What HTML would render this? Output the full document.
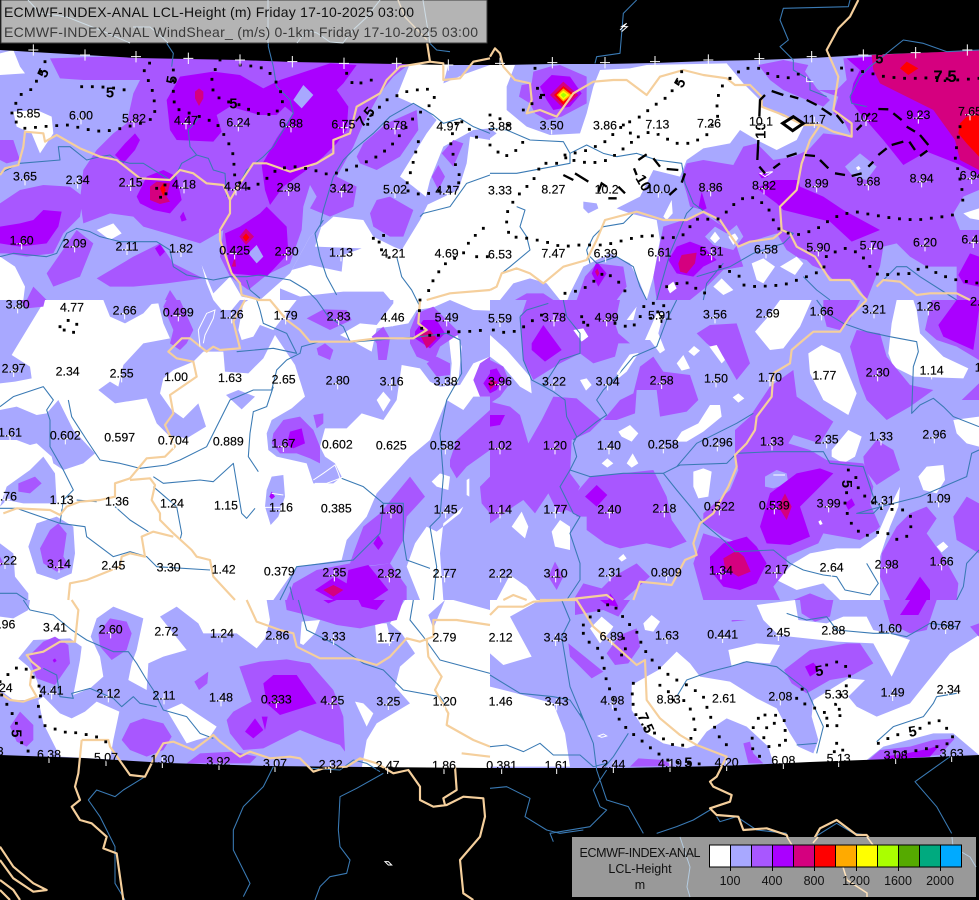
<!DOCTYPE html>
<html><head><meta charset="utf-8"><style>
html,body{margin:0;padding:0;background:#000;width:979px;height:900px;overflow:hidden}
svg{display:block;font-family:"Liberation Sans",sans-serif}
.lab{text-anchor:middle;dominant-baseline:central;font-size:37px;fill:#000;stroke:#000;stroke-width:.5}
.cl{font-weight:bold;font-size:44px;text-anchor:middle;dominant-baseline:central;fill:#000}
.r{fill:none;stroke:#3a7ab4;stroke-width:3.2;stroke-linejoin:round}
.b{fill:none;stroke:#f5cf9c;stroke-width:6.5;stroke-linejoin:round}
.d{fill:none;stroke:#000;stroke-width:8.5;stroke-dasharray:0 32;stroke-linecap:square}
.k{fill:none;stroke:#000;stroke-width:7;stroke-linecap:butt}
.x{fill:none;stroke:none;marker-start:url(#c);marker-mid:url(#c);marker-end:url(#c)}
.v{fill:none;stroke:none;marker-start:url(#t);marker-mid:url(#t);marker-end:url(#t)}
</style></head><body>
<svg width="979" height="900" viewBox="0 0 979 900" xmlns="http://www.w3.org/2000/svg">
<defs><marker id="c" markerUnits="userSpaceOnUse" markerWidth="40" markerHeight="40" refX="20" refY="20" viewBox="0 0 40 40"><path d="M20 3V37M5 20H35" stroke="#fff" stroke-width="3" fill="none"/></marker><marker id="t" markerUnits="userSpaceOnUse" markerWidth="40" markerHeight="40" refX="20" refY="20" viewBox="0 0 40 40"><path d="M20 3V37" stroke="#fff" stroke-width="3" fill="none"/></marker></defs>

<!-- TILE 1 -->
<svg x="0" y="0" width="490" height="300" viewBox="0 0 1470 900">
<rect width="1470" height="900" fill="#a8a8ff"/>
<path fill="#fff" d="M0 160 40 150 60 200 75 220 0 225ZM40 335 110 330 155 350 160 400 120 460 95 400 50 380ZM290 690 340 670 365 700 330 720ZM0 770 45 800 75 860 70 900 0 900ZM1230 190 1470 190 1470 900 780 900 870 820 930 710 1000 650 1090 660 1120 710 1180 740 1205 750 1260 660 1290 600 1240 560 1200 530 1280 400 1310 360 1280 330 1190 290ZM605 795 640 880 690 830 725 890 780 900 640 900 620 850Z"/>
<path fill="#a8a8ff" d="M1330 250 1345 195 1470 195 1400 220ZM1330 440 1420 390 1470 385 1470 420 1410 410 1400 490 1375 570 1270 620 1290 540ZM875 810 930 795 1025 815 1030 765 1085 745 945 740 970 660 1000 650 930 710 870 820ZM840 865 900 890 940 885 1030 875 1150 875 1180 910 840 910Z"/>
<path fill="#a857ff" d="M150 175 310 170 1230 190 1180 230 1140 280 1090 370 1060 440 1010 530 1070 560 1060 620 990 650 930 625 950 590 930 555 910 620 905 690 870 790 800 825 745 870 690 830 660 770 670 690 600 730 500 700 430 680 400 650 330 640 250 670 240 600 250 510 290 450 340 400 380 370 400 280 420 240 250 240 180 235ZM1070 470 1090 430 1160 370 1250 330 1255 390 1200 470 1130 510 1080 490ZM0 610 60 570 130 555 210 560 250 590 240 650 190 700 160 760 80 770 20 760 0 760ZM140 820 230 690 280 730 240 830 160 860ZM290 835 400 770 480 730 520 790 610 835 500 850 400 860 330 860ZM80 900 100 860 140 900ZM495 900 510 870 530 900ZM0 420 40 420 60 480 20 490 0 480ZM1110 640 1130 600 1170 590 1240 630 1210 710 1170 710 1120 680ZM1325 460 1360 420 1390 430 1360 500ZM1295 530 1315 495 1335 530 1315 570Z"/>
<path fill="#aa00ff" d="M0 680 60 670 100 660 130 630 185 635 175 680 140 730 60 740 0 730ZM500 300 540 230 640 215 720 225 790 265 840 240 900 220 990 190 1070 195 1030 250 1010 270 1045 320 1040 390 1010 430 970 470 920 510 850 560 810 615 795 570 785 495 830 415 880 340 855 320 830 345 780 345 690 320 650 345 665 395 640 425 530 420 510 390ZM800 620 860 680 865 760 800 830 690 820 675 700 720 680 780 640ZM410 590 440 530 490 510 530 530 545 600 510 640 460 630 420 610ZM540 650 550 635 560 660 545 665ZM465 745 480 733 495 755 480 770ZM345 465 375 430 405 400 420 420 405 450 370 490Z"/>
<path fill="#a8a8ff" d="M880 300 910 255 940 285 905 325ZM745 760 770 735 790 770 770 790Z"/>
<path fill="#d5007f" d="M585 275 597 265 610 275 610 295 597 318 585 295ZM450 560 470 545 510 550 500 590 510 605 480 612 450 600ZM718 710 738 685 762 710 738 735ZM695 800 705 770 708 800Z"/>
<path fill="#f00" d="M480 565 490 550 497 570 490 590ZM728 712 738 700 748 712 738 725Z"/>
</svg>

<!-- TILE 2 -->
<svg x="490" y="0" width="489" height="300" viewBox="0 0 1467 900">
<rect width="1467" height="900" fill="#a8a8ff"/>
<path fill="#fff" d="M0 195 75 195 50 260 50 330 110 380 180 405 270 400 290 340 310 260 330 210 420 205 470 195 710 190 760 250 810 300 820 320 880 350 945 370 920 420 860 450 800 420 750 390 720 430 640 445 590 480 570 530 490 510 450 590 380 625 420 640 500 660 510 720 490 830 470 900 450 850 420 790 360 760 280 800 240 880 232 900 210 900 170 850 120 835 70 850 30 900 0 900Z"/>
<path fill="#a8a8ff" d="M0 385 20 400 0 415ZM280 605 320 610 325 625 295 640 280 625Z"/>
<path fill="#a857ff" d="M87 290 95 255 125 250 130 215 180 200 210 195 290 230 290 310 215 350 170 360 135 340 120 310ZM590 490 640 480 730 495 760 440 800 430 850 480 910 470 955 450 1000 400 1085 410 1060 360 1030 340 1045 290 985 270 1040 270 1070 240 1060 175 1467 150 1467 900 1400 900 1400 800 1310 800 1260 770 1220 730 1180 740 1170 800 1130 900 1090 840 1030 840 1000 810 950 790 890 750 860 700 780 725 740 740 700 680 640 630 600 620 590 580 575 530ZM805 195 880 180 955 195 945 215 980 265 1020 300 1000 320 950 300 880 270 840 240ZM520 680 640 640 700 680 740 740 760 800 700 810 650 860 600 900 500 900 490 830ZM260 900 285 830 320 790 400 800 410 860 380 900ZM75 900 110 880 160 880 190 900Z"/>
<path fill="#a8a8ff" d="M1390 640 1420 590 1467 570 1467 690 1410 690ZM645 710 675 680 710 700 740 675 760 710 730 750 670 735ZM650 860 700 810 760 800 800 770 880 760 950 780 1000 830 1020 900 640 900ZM1065 500 1110 460 1160 500 1130 540 1090 530Z"/>
<path fill="#fff" d="M660 715 675 695 690 715 675 730ZM715 710 735 700 745 715 730 735ZM785 790 820 775 855 800 820 850 800 840ZM870 800 920 770 940 790 915 825ZM670 860 695 835 730 870 700 885ZM530 860 550 845 560 865 540 880ZM520 650 545 600 548 640 530 660ZM1420 640 1467 625 1467 660 1440 655ZM1098 503 1106 498 1112 505 1104 512Z"/>
<path fill="#aa00ff" d="M150 260 185 225 240 230 275 280 240 320 190 330 170 300ZM1070 175 1467 150 1467 525 1400 490 1310 455 1240 495 1180 420 1110 340 1080 300 1090 250 1110 210ZM800 565 850 540 925 540 930 560 1000 590 1060 630 1170 690 1085 725 1020 665 880 630 860 610ZM625 625 635 575 650 625 640 630ZM535 780 560 740 600 725 640 740 680 780 640 800 610 830 560 820ZM1405 825 1440 760 1467 770 1467 860 1420 850ZM305 820 320 785 350 820 325 860ZM805 520 820 515 835 530 815 535Z"/>
<path fill="#d5007f" d="M180 285 220 245 265 285 220 325ZM1145 165 1467 150 1467 510 1410 480 1395 420 1330 330 1230 280 1170 250 1150 210ZM565 790 575 765 620 758 615 790 590 820 570 815ZM315 815 322 805 328 820 322 830Z"/>
<path fill="#f00" d="M192 285 220 258 255 285 220 315ZM1230 205 1250 185 1285 205 1255 225ZM1410 370 1430 350 1467 345 1467 470 1430 430 1405 400Z"/>
<path fill="#fa0" d="M200 285 220 265 245 285 220 305Z"/>
<path fill="#ff0" d="M205 285 220 272 238 285 220 300Z"/>
<path fill="#af0" d="M212 285 220 278 230 285 220 294Z"/>
</svg>

<!-- TILE 3 -->
<svg x="0" y="300" width="490" height="300" viewBox="0 0 1470 900">
<rect width="1470" height="900" fill="#fff"/>
<path fill="#a8a8ff" d="M0 0 135 0 50 140 35 165 90 200 95 235 45 245 0 250ZM310 0 330 50 375 70 430 40 455 12 475 10 490 70 510 115 430 130 370 195 355 260 330 245 295 270 345 310 440 295 470 370 505 405 560 415 618 380 595 310 550 355 515 330 480 280 490 235 520 210 580 185 610 155 670 155 675 215 745 220 790 175 825 105 885 195 915 290 875 325 815 360 800 400 805 450 830 470 920 490 940 550 1000 550 1025 530 1005 490 975 470 960 440 975 385 1040 385 1085 340 1150 360 1190 300 1205 195 1260 205 1290 245 1320 260 1380 255 1420 190 1470 170 1470 0ZM0 330 50 320 110 345 140 340 175 300 220 390 285 460 250 490 190 510 160 490 155 470 110 430 90 435 50 420 0 420ZM0 620 20 560 90 510 130 470 165 520 170 610 130 610 70 610 20 600ZM85 740 110 670 170 650 220 680 225 760 215 820 170 840 110 820ZM0 730 40 760 45 830 85 880 85 900 0 900ZM800 570 815 530 850 525 855 590 835 650 812 675 795 620ZM678 285 715 270 765 290 725 328ZM1290 420 1340 300 1390 330 1420 290 1470 290 1470 900 820 900 890 800 1025 780 1040 720 1100 650 1130 580 1230 470Z"/>
<path fill="#fff" d="M640 0 720 0 695 30 665 30ZM715 90 730 10 745 0 890 0 820 90 780 75 760 110 725 120ZM1020 105 1080 70 1130 75 1180 10 1180 0 1350 0 1300 22 1250 30 1225 70 1170 80 1130 85 1115 155 1060 125ZM1350 0 1470 0 1470 32 1420 30ZM1130 300 1150 275 1172 300 1150 335ZM1295 545 1320 520 1350 530 1345 570 1310 560ZM1345 100 1370 100 1385 140 1375 250 1350 250 1355 190ZM1245 730 1280 680 1310 695 1380 640 1390 620 1330 670 1320 760 1330 900 1260 900 1220 800ZM1400 540 1408 535 1408 590 1400 585Z"/>
<path fill="#a857ff" d="M60 0 135 0 130 20 80 25ZM490 20 500 0 540 0 580 90 560 130 540 150 510 130 520 90ZM920 55 970 28 1040 30 1055 60 990 90ZM950 145 975 130 1000 150 990 180 955 165ZM1115 110 1150 80 1170 115 1160 180 1135 180 1130 130ZM1230 90 1250 40 1300 20 1380 100 1320 140 1300 190 1250 170 1230 130ZM1280 190 1310 170 1350 190 1350 225 1310 230ZM820 400 850 360 900 350 940 390 960 440 960 490 930 475 890 460 840 460 815 430ZM940 345 970 340 970 370 950 385ZM1420 240 1440 190 1470 170 1470 290 1440 290ZM1350 480 1370 420 1470 330 1470 450 1400 500 1370 535 1350 500ZM1440 560 1470 530 1470 640 1445 610ZM1060 760 1090 680 1140 640 1230 530 1275 590 1220 650 1210 720 1170 790 1085 800 1050 790ZM860 900 880 850 950 810 1050 790 1100 800 1170 790 1220 860 1220 900ZM55 550 105 530 125 550 90 580 55 575ZM120 745 150 690 175 670 200 700 190 770 210 800 170 815 130 790ZM0 770 10 790 0 800Z"/>
<path fill="#aa00ff" d="M1245 95 1270 60 1310 60 1335 100 1290 145 1245 115ZM870 395 905 385 915 430 880 445 860 435ZM1450 250 1470 220 1470 280ZM1120 730 1135 705 1150 730 1135 750ZM945 870 1005 830 1040 850 1045 810 1105 795 1165 870 1120 900 1000 900ZM808 590 815 575 825 590 815 598Z"/>
<path fill="#d5007f" d="M1260 105 1290 90 1310 115 1280 145ZM1465 250 1470 240 1470 265ZM970 870 1000 855 1030 870 1000 890Z"/>
</svg>

<!-- TILE 4 -->
<svg x="490" y="300" width="489" height="300" viewBox="0 0 1467 900">
<rect width="1467" height="900" fill="#a8a8ff"/>
<path fill="#fff" d="M0 105 50 150 120 230 125 280 90 260 40 200 0 170ZM465 120 500 40 520 40 505 100 525 150 510 160 480 120ZM410 60 440 20 430 60ZM795 95 830 55 870 0 965 0 930 80 880 145 840 150ZM955 160 995 135 1050 160 1100 280 1075 345 1000 300 960 220ZM1245 0 1270 0 1280 30 1290 100 1360 170 1435 205 1420 235 1270 230 1210 200 1195 160 1205 70 1220 0ZM1025 450 1075 390 1115 410 1095 470 1060 490 1025 470ZM1285 530 1310 500 1360 495 1365 540 1340 580 1300 570ZM1390 360 1467 350 1467 440 1430 430 1400 400ZM610 515 640 505 665 515 655 590 625 595 610 560ZM860 840 910 790 960 760 1040 745 1110 745 1160 710 1190 640 1230 560 1225 620 1200 680 1170 770 1170 900 1050 900 1000 850 920 870ZM20 900 60 825 110 860 140 900Z"/>
<path fill="#a857ff" d="M90 60 110 0 390 0 375 70 385 100 420 130 385 130 375 170 310 190 270 160 210 190 130 240 100 180ZM0 305 60 320 90 345 115 430 155 360 190 290 260 295 335 360 300 395 245 420 240 520 270 560 250 600 270 650 230 630 205 640 175 580 135 640 100 600 70 620 0 670ZM240 600 300 530 400 520 490 510 530 590 545 660 590 725 540 745 470 730 390 745 345 730 290 690 290 650 260 650ZM340 360 390 300 430 280 450 200 490 170 520 215 600 225 625 300 590 335 510 350 500 270 440 270 435 340 380 360ZM620 100 660 75 740 70 780 190 740 240 700 170 650 130ZM735 390 780 350 840 260 910 210 920 290 1030 365 990 430 910 405 895 430 960 450 1010 480 1120 490 1150 560 1140 610 1170 680 1160 690 1110 720 1000 700 985 730 890 770 800 750 700 710 640 670 640 640 720 570 745 510 735 470ZM610 790 640 700 800 750 890 770 890 810 850 860 870 900 640 900ZM1080 140 1100 90 1170 100 1190 170 1260 255 1330 270 1260 320 1190 360 1130 300 1110 250ZM1000 0 1110 0 1080 60 1050 90 1010 80 1000 40ZM1305 90 1325 0 1467 0 1467 180 1400 140 1340 120ZM1415 300 1467 250 1467 300ZM1120 470 1160 420 1210 450 1230 510 1160 555 1125 510ZM1390 650 1430 590 1467 610 1467 760 1400 720ZM1175 760 1220 680 1260 640 1310 620 1340 655 1310 700 1360 770 1405 850 1400 900 1200 900 1170 830ZM250 900 280 850 335 865 370 830 440 790 480 830 400 900ZM175 830 195 785 220 830 200 870ZM910 900 960 880 1010 900ZM0 180 40 200 60 250 30 290 0 310Z"/>
<path fill="#a8a8ff" d="M825 530 860 510 890 520 895 550 850 565 825 560Z"/>
<path fill="#fff" d="M250 90 280 85 295 110 275 125ZM595 155 612 138 630 152 612 168ZM560 190 580 165 600 205 575 212ZM658 140 680 135 705 180 695 190ZM270 240 290 235 305 255 288 272ZM385 395 420 375 445 400 425 425 395 410ZM575 395 625 370 660 315 690 315 695 350 640 395 590 425 555 425ZM335 490 352 475 370 490 352 503ZM410 490 428 460 445 490 425 503ZM728 292 745 280 763 295 745 308ZM380 220 400 190 418 165 445 160 410 215 385 235ZM65 680 95 635 115 680 105 715ZM185 695 210 660 240 680 240 750 195 740ZM385 775 400 762 410 775 395 785ZM1340 740 1360 725 1375 740 1355 757ZM985 665 992 660 998 672 990 675Z"/>
<path fill="#aa00ff" d="M125 130 160 75 215 150 165 185 125 150ZM0 345 45 345 30 375 0 380ZM285 590 320 555 352 585 320 620ZM660 770 700 730 770 710 800 740 830 790 800 850 750 870 700 860 660 810ZM810 680 840 580 920 520 990 505 1030 520 930 620 960 710 900 735 830 730ZM1065 610 1085 595 1095 615 1075 630ZM1245 900 1290 830 1320 870 1320 900ZM1345 75 1400 0 1467 0 1467 30 1450 150 1360 110ZM0 210 20 205 40 240 20 270 0 280ZM360 880 375 900 355 900Z"/>
<path fill="#d5007f" d="M700 775 740 752 762 770 782 815 745 830 705 805ZM865 620 885 580 905 620 890 660ZM0 240 25 245 0 270Z"/>
</svg>

<!-- TILE 5 -->
<svg x="0" y="600" width="490" height="300" viewBox="0 0 1470 900">
<rect width="1470" height="900" fill="#a8a8ff"/>
<path fill="#fff" d="M90 0 800 0 810 60 795 115 770 145 710 100 610 100 595 70 530 20 480 50 560 150 490 170 445 190 440 270 385 240 395 190 410 150 430 55 340 20 290 55 272 110 300 170 310 230 270 265 220 285 240 180 245 140 210 115 100 120 55 175 85 200 110 240 125 290 90 300 40 300 0 270 0 50 40 55 85 30ZM115 300 130 370 180 470 330 478 340 420 358 335 290 305 255 335 215 355 180 340 130 290ZM500 330 545 310 650 380 630 410 590 420 560 430ZM1065 305 1090 310 1120 340 1100 380ZM1215 0 1470 0 1470 505 1085 505 1100 420 1130 370 1230 310 1185 260 1200 200 1245 160 1205 100 1170 70ZM1125 70 1160 70 1175 130 1130 130ZM900 130 905 65 960 60 945 100 910 135Z"/>
<path fill="#a8a8ff" d="M1285 45 1335 0 1300 85ZM1360 0 1470 0 1470 30Z"/>
<path fill="#a857ff" d="M85 170 130 125 165 110 205 135 210 190 165 255 110 235ZM295 100 330 55 380 65 395 100 380 150 335 180 300 140ZM583 245 625 215 622 250 597 270ZM365 420 390 370 430 355 490 370 515 410 490 450 440 470 390 450ZM560 490 600 460 700 455 770 470 750 490ZM30 380 60 335 100 375 100 420 80 440 50 425ZM718 200 780 185 860 178 930 190 1000 270 1030 350 1035 455 1020 435 975 420 900 390 860 410 790 445 730 450 690 400 680 360 700 335 755 305ZM855 0 1210 0 1190 60 1080 85 1010 75 900 40 860 30Z"/>
<path fill="#aa00ff" d="M970 0 1010 0 985 10ZM1075 0 1155 0 1130 30 1085 20ZM790 250 820 225 890 225 950 310 840 345 800 310ZM735 395 765 355 790 390 760 415ZM785 350 803 350 795 390ZM158 180 165 175 170 183 162 188Z"/>
</svg>

<!-- TILE 6 -->
<svg x="490" y="600" width="489" height="300" viewBox="0 0 1467 900">
<rect width="1467" height="900" fill="#a8a8ff"/>
<path fill="#fff" d="M0 0 150 0 60 50 125 170 40 195 0 160ZM460 70 485 45 510 65 490 95 465 90ZM300 85 335 50 370 80 360 95 330 130ZM0 260 80 280 190 310 225 400 240 500 0 500ZM425 255 505 210 560 155 600 190 630 230 720 245 800 295 860 325 900 400 925 440 970 460 985 420 965 350 970 300 1075 235 1125 240 1075 290 1100 320 1160 350 1260 310 1300 260 1380 160 1467 105 1467 465 1390 400 1330 400 1180 440 1130 480 1090 490 850 490 835 440 770 380 710 355 650 395 620 435 590 445 520 430 470 400 425 330ZM800 15 915 0 925 60 1010 70 1060 50 1130 50 1150 90 1200 100 1260 120 1205 230 1150 130 1040 125 900 110 860 100 820 60ZM715 150 800 130 870 135 840 190 760 185 725 200Z"/>
<path fill="#a857ff" d="M930 0 1030 0 1020 50 975 65 935 40ZM1180 0 1340 0 1310 90 1260 100 1200 70ZM1440 80 1467 70 1467 110ZM882 210 960 150 1070 130 1110 130 1150 190 1080 230 1020 240 950 280 905 250ZM350 160 390 105 440 85 450 140 415 190 375 195ZM235 130 340 215 305 235 240 170ZM255 0 420 0 385 50 340 30 255 45ZM420 500 445 475 520 480 550 498ZM760 430 780 425 790 460 820 490 775 490ZM1130 485 1170 450 1260 440 1330 420 1395 415 1350 465 1130 482ZM725 60 770 60 725 65Z"/>
<path fill="#aa00ff" d="M1230 45 1260 0 1310 0 1285 45ZM945 200 970 188 990 210 960 230ZM1180 470 1250 460 1320 445 1350 435 1320 470 1200 478ZM330 0 375 0 385 20 350 15Z"/>
</svg>

<!-- BLACK MASK -->
<path fill="#000" d="M0 0H979V50L967 51 915 53 863 55 812 58 760 60 708 61 655 63 605 64 552 64 500 65 448 65 397 64 345 63 292 62 240 60 188 59 136 58 85 55 33 52 0 50ZM0 755 83 758 167 763 267 766 367 767 490 768 623 768 723 766 810 762 890 759 979 755V900H0Z"/>

<!-- LINES TILE 1 -->
<svg x="0" y="0" width="490" height="300" viewBox="0 0 1470 900" style="overflow:visible">
<path class="r" d="M480 100 520 160 515 200M600 350 565 390 570 440 590 465 545 490 520 540M590 465 625 475 640 510 675 520 680 590M805 130 805 140 820 200 830 260 870 300 880 340 850 390 820 440 790 470 740 510 715 560M0 520 60 490 180 480 175 440 210 440 260 480 300 470 330 465 350 480 390 490 430 490 510 540M0 770 40 760 140 770 170 760 200 700 230 685 270 695 300 710 360 725 470 725 510 750 520 800 560 825 640 840 690 830 740 830 780 825 870 840 920 870 950 900M740 840 750 870 780 895M960 680 970 630 1000 530 1030 480 1060 450 1120 400 1170 350 1240 310 1300 345 1330 370 1380 355 1420 380 1470 400M970 660 945 700 960 770 980 830 1010 885M1190 770 1205 830 1235 870 1260 920M1260 650 1270 640 1350 620 1400 550 1470 525M1290 130 1310 150 1350 155"/>
<path class="b" d="M0 525 15 505 55 495 70 440 75 395 130 400 135 425 170 405 240 445 300 470 350 480 420 535 510 540 540 510 580 520 620 550 670 555 690 600 690 640 660 690 660 720 695 820 720 850 725 885 780 900M690 600 720 550 760 490 800 490 870 515 950 490 1000 460 1000 420 1050 400 1070 320 1140 280 1160 240 1200 200 1290 185 1280 120M1290 185 1330 190 1330 240 1380 235 1420 185 1470 175M1280 900 1350 880 1470 870"/>
</svg>
<!-- LINES TILE 2 -->
<svg x="490" y="0" width="489" height="300" viewBox="0 0 1467 900" style="overflow:visible">
<path class="r" d="M440 0 400 40 395 100 390 160 320 170 315 190M1080 0 1075 20 880 25 870 60 895 120 870 140 910 180 910 210 960 240 960 270 1010 290M1080 290 1110 230 1140 200 1240 120 1300 130 1370 155 1467 150M1080 290 1085 310 1130 320M0 520 80 520 240 490 240 460 290 435 340 460 380 470 440 460 500 480 575 490 585 550 610 610 650 640M240 460 220 425 120 420 50 390 0 385M80 620 105 630 90 680 110 710 120 750 60 800 35 820M430 640 400 670 340 680 310 710 290 750 300 790M300 770 320 790 380 770 430 800 450 860 470 900M500 900 520 830 540 760 590 640 610 620M1180 840 1220 800 1250 800 1290 830 1400 900M620 830 720 800 790 760 880 730 910 700 880 690M700 790 650 850 640 900M940 830 980 870 1020 900"/>
<path class="b" d="M0 170 15 145 30 160 40 200 75 240 120 250 125 300 110 340 150 330 200 350 250 280 310 245 370 240 410 240 470 285 510 230 580 210 640 225 710 235 735 255 780 255 815 290 815 320 880 345 940 375 990 375 1030 395 1085 410 1085 370 1030 330 1045 230 1010 150 1045 85 1080 50 1105 0M990 375 960 420 935 490 920 570 870 620 875 690 900 700 920 740 975 770 1020 840 1080 840 1110 880 1130 900M875 695 850 715 780 725 745 740 710 690 690 660 640 635 590 660 520 660 440 635 345 660 320 720 290 780 220 800 160 850 120 820 80 805 35 820 20 860 0 870M1160 860 1180 840 1230 845 1280 885 1320 880 1400 880 1440 900"/>
<path fill="none" stroke="#fff" stroke-width="3" d="M390 90 410 70 395 80 412 80 395 95M950 230 950 245 970 245M810 520 825 530 848 515Z"/>
</svg>
<!-- LINES TILE 3 -->
<svg x="0" y="300" width="490" height="300" viewBox="0 0 1470 900" style="overflow:visible">
<path class="r" d="M0 320 40 290 130 260 160 300 140 330 150 360 150 440 190 510 220 570 190 600 180 670M205 300 215 350 260 420 300 480 360 490 420 505 500 495 540 480 620 440 650 380 690 300 760 270 815 270 830 210 860 180 900 160 905 140 960 125 1070 125 1260 110 1340 100 1380 120 1385 220 1340 300 1320 400 1330 530 1320 650 1290 680 1310 800 1300 900M820 260 800 320 760 335 750 400 745 470 775 515M710 155 820 145 890 160 860 100 790 70 780 30 770 0M950 0 985 50 1030 80 1050 125M460 530 490 550 600 540 640 545 700 490 725 640 740 655 765 625M460 560 530 620 545 700 540 720M345 620 390 660 445 695M1025 535 1090 560 1150 610 1210 610 1210 720 1220 780 1290 805M1150 610 1140 700 1060 780 890 800 840 900M0 625 50 625 180 670 255 680 260 710 340 770 390 755 440 770 470 800 630 810M230 600 290 605M0 880 50 880 80 900M870 860 880 900"/>
<path class="b" d="M735 0 700 65 720 145 660 150 640 140 620 155 570 115 545 115 505 155 530 175 580 185 590 230 510 285 520 340 495 375 525 440 495 470 440 475 390 535 345 550 345 590 300 600 240 605 200 620 180 645 150 630 50 625 10 640M770 0 810 0 860 60 900 90 930 125 1050 125 1130 115 1240 115 1280 90 1255 70 1260 0M390 540 450 535 465 555 455 600 480 640 480 660 520 700 575 750 590 770 630 780 640 830 705 900M520 710 460 695 425 710 435 770 390 760 365 770 360 800 260 840 210 850 205 900"/>
<path fill="none" stroke="#fff" stroke-width="3" d="M600 140 595 90 620 40 645 30 640 55 615 105 610 130M940 540 970 520 1005 495 1015 520 1020 535 980 550 945 550M815 580 850 585M795 622 840 622"/>
</svg>
<!-- LINES TILE 4 -->
<svg x="490" y="300" width="489" height="300" viewBox="0 0 1467 900" style="overflow:visible">
<path class="r" d="M90 50 100 180 125 240 160 258 210 180 270 160 270 100 230 50 220 0M90 50 110 30 175 10M160 258 190 275 225 300 230 350 260 410 250 430 260 470 240 510 210 560 250 640 270 650 240 700 270 790 270 840 230 900M250 420 320 365 350 345 320 300 340 270 380 230 430 170 500 140 530 60 560 0M240 510 300 530 400 520 520 520 570 495 710 490 740 460 850 455 1000 455 1020 490 1120 500 1150 590 1170 620 1150 640 1100 640 1210 610 1290 590 1430 530 1445 460 1467 450M520 520 560 570 610 630 640 670 700 720 735 755 850 750 900 790 940 810 1000 825 1040 830 1065 870 1140 885 1165 850 1130 790M560 500 620 430 740 370 790 340M1060 70 1130 95 1200 110 1280 125 1285 155 1270 200 1265 340 1290 315 1330 295 1360 320 1390 350 1467 380M980 0 1010 40 1060 70M1467 750 1430 790 1420 860 1400 900"/>
<path class="b" d="M1130 0 1080 50 1050 95 970 95 940 120 905 150 900 190 850 220 845 290 800 350 795 390 770 430 735 465 740 500 715 560 670 640 630 670 610 730 620 765 585 780 545 855 500 850 450 845 430 900M40 900 70 885 110 900M150 900 220 900 350 885 370 900"/>
<path fill="none" stroke="#fff" stroke-width="3" d="M850 525H885M385 225 400 195 420 165 445 160"/>
</svg>
<!-- LINES TILE 5 -->
<svg x="0" y="600" width="490" height="300" viewBox="0 0 1470 900" style="overflow:visible">
<path class="r" d="M70 0 90 30 160 45 215 90 260 120 340 155 385 155 410 190 440 240 460 270 490 330 560 350 600 400 640 415M130 205 170 225 180 290 220 295 215 280 270 265 340 295 365 320 400 290 420 310 470 320M895 0 920 90 1010 135 1090 190 1150 210 1210 270 1320 290 1340 315M1240 0 1230 60 1270 110 1320 180 1470 220M435 530 370 570 345 590 290 570 265 600 300 650 345 740 345 850 375 900M820 500 790 560 730 620 700 690 700 750 750 850 730 890M1150 520 1070 565 1020 590 1015 690 1020 740 1050 780 1040 820 990 830 960 860 945 900M935 505 1020 510 1060 480 1100 490 1140 515"/>
<path class="b" d="M215 0 235 30 225 125 180 125 130 155 80 165 95 185 120 205 95 215 90 255 110 290 70 305 30 300 0 280M740 0 770 65 840 90 880 100 890 140 960 175 1060 175 1130 195 1170 170 1220 115 1260 125 1300 110 1300 60 1370 60 1470 75M1280 115 1285 170 1325 230 1305 270 1345 340 1340 375 1420 420 1470 440M1385 460 1470 470M245 420 325 420 330 440 390 525 435 530 460 480 490 430 520 425 580 450 640 405 660 425 720 470 750 455 810 475 870 470 900 475 940 515 970 505 1040 500 1080 475 1130 490 1180 520 1225 510 1260 560 1260 600 1300 620 1340 615 1390 590 1450 595 1455 650 1440 710 1380 780 1390 880 1420 900M245 420 235 520 225 560 240 600 215 620 240 660 275 670 320 710 310 745 350 760 360 830 370 900M1365 500 1370 570 1330 595 1335 615M0 740 40 800 100 850 140 870 100 875 40 835 0 780M0 840 40 870 60 900M0 870 30 900"/>
<path fill="none" stroke="#fff" stroke-width="3" d="M1155 785 1165 785 1175 795 1165 795Z"/>
</svg>
<!-- LINES TILE 6 -->
<svg x="490" y="600" width="489" height="300" viewBox="0 0 1467 900" style="overflow:visible">
<path class="r" d="M215 0 240 60 215 110 240 260 310 430 320 510 350 600 415 620 460 700M0 225 90 280 190 290 240 300 280 360 270 340M0 440 50 435 100 455 150 430 190 465 270 465 310 500 350 490M350 510 310 570 330 620 350 630 300 680 180 700 190 725M415 400 370 470 345 500M0 565 50 560 120 595 105 650 170 690 210 700 280 690M560 290 590 240 660 215 720 200 770 185 860 200 950 270 1000 380 980 460M920 435 980 430M890 40 950 60 1010 50 1040 90 1150 100 1200 100 1250 110 1320 70 1400 80M500 700 560 680 610 660 660 630M1160 425 1210 380 1300 350 1330 310 1340 290 1400 280M1380 470 1275 545 1340 620 1385 700M680 650 690 665 740 650 800 690 890 700M960 720 1040 670 1090 700 1130 705"/>
<path class="b" d="M0 45 25 20 100 20 130 5 220 0 260 0 310 80 390 150 440 195 465 180 470 300 510 355 570 405 620 435 710 470 680 530 660 545 670 560 725 585 720 605 660 625 680 645 745 650 760 690 830 685 890 705 900 730M970 720 990 685 1040 660 1100 705 1130 705 1150 730"/>
<path fill="none" stroke="#fff" stroke-width="3" d="M325 408 340 402 350 408 335 412Z"/>
</svg>

<!-- CONTOURS + CROSSES + LABELS TILE 1 -->
<svg x="0" y="0" width="490" height="300" viewBox="0 0 1470 900" style="overflow:visible">
<path class="d" d="M135 185 100 265 60 285 35 335 40 360 75 385 150 378 205 375 260 388 310 395 365 385 440 365 465 350 462 290 455 265 440 230 430 205 460 180M245 260 295 260 350 265 375 270M520 210 520 285 525 325 600 350 650 370 665 395 680 415 700 465 705 540 750 567 795 540 835 505 890 500 940 510 990 525 1040 510 1090 490 1140 465 1180 430 1245 348 1285 320 1305 295 1280 265 1220 275 1160 300 1110 350 1095 400M660 180 635 230 640 280 665 300 720 315 770 340 825 345 850 300 840 270 820 230 800 210 775 200 720 195M1040 220 1060 255 1115 240 1120 215M470 565 490 550 505 565 490 600 470 580M1255 425 1235 505 1215 570 1265 585 1310 575 1385 545 1365 490 1350 420 1375 355 1415 395 1450 435M1120 715 1155 705 1130 735 1150 755 1170 775M1450 685 1410 720 1390 760 1330 795 1300 840 1280 885M1430 770 1470 770"/>
<text class="cl" transform="translate(132,220) rotate(-65)">5</text><text class="cl" transform="translate(518,240) rotate(-80)">5</text><text class="cl" x="330" y="280">5</text><text class="cl" x="700" y="314">5</text><text class="cl" transform="translate(1098,352) rotate(-50)">7.5</text>
<polyline class="x" points="100,150 255,165 408,170 565,175 720,180 877,185 1032,190 1190,190 1345,195"/>
<polyline class="x" transform="translate(0,9)" points="243,347 402,356 558,362 715,368 873,371 1030,374 1185,377 1345,380 75,530 233,540 392,547 552,554 708,560 866,562 1025,566 1185,568 1342,571 65,722 224,731 381,739 543,745 704,752 860,755 1023,758 1180,761 1340,761"/>
<g class="lab"><text class="lab" x="85" y="341">5.85</text><text class="lab" x="243" y="347">6.00</text><text class="lab" x="402" y="356">5.82</text><text class="lab" x="558" y="362">4.47</text><text class="lab" x="715" y="368">6.24</text><text class="lab" x="873" y="371">6.88</text><text class="lab" x="1030" y="374">6.75</text><text class="lab" x="1185" y="377">6.78</text><text class="lab" x="1345" y="380">4.97</text>
<text class="lab" x="75" y="530">3.65</text><text class="lab" x="233" y="540">2.34</text><text class="lab" x="392" y="547">2.15</text><text class="lab" x="552" y="554">4.18</text><text class="lab" x="708" y="560">4.84</text><text class="lab" x="866" y="562">2.98</text><text class="lab" x="1025" y="566">3.42</text><text class="lab" x="1185" y="568">5.02</text><text class="lab" x="1342" y="571">4.47</text>
<text class="lab" x="65" y="722">1.60</text><text class="lab" x="224" y="731">2.09</text><text class="lab" x="381" y="739">2.11</text><text class="lab" x="543" y="745">1.82</text><text class="lab" x="704" y="752">0.425</text><text class="lab" x="860" y="755">2.30</text><text class="lab" x="1023" y="758">1.13</text><text class="lab" x="1180" y="761">4.21</text><text class="lab" x="1340" y="761">4.69</text></g>
</svg>
<!-- TILE 2 -->
<svg x="490" y="0" width="489" height="300" viewBox="0 0 1467 900" style="overflow:visible">
<path class="d" d="M575 215 540 285 495 315 450 350 400 375 345 425 295 450 250 460 200 490 155 490 130 540 75 595 50 640 50 680 60 710 115 715 165 725 215 740 270 735 345 735 425 715 475 705 525 715 575 710 590 690 625 655 680 660 705 640 740 605 770 590 800 595 835 625 845 650 860 680 875 695 920 705 975 690 1020 660 1050 645 1095 635 1150 645 1210 655 1280 660 1360 650 1415 640M1410 380 1395 470 1415 560 1420 620M720 235 760 205 810 205 840 225 890 235 945 215M1467 235 1400 240 1335 232 1290 235 1240 235 1185 230 1120 215 1095 212 1060 205 1030 200M400 375 435 415 480 395 510 405 555 430 605 430 650 405 685 345 680 310 690 265 720 235M0 435 40 470 70 460 100 425M0 345 40 360 60 380M225 465 245 480 300 490 355 480 395 450 440 415M225 880 275 870 310 845 345 815 385 845 410 880 410 900M530 860 580 845 610 855 625 875 650 880M690 800 750 830 760 855 800 860 880 855 950 830 1000 810 1010 765 1065 745 1110 760 1140 800 1165 825 1270 820 1300 795 1350 825 1400 840 1467 850M135 205 150 200M100 330 155 290 130 240"/>
<path class="k" d="M445 480 470 463M490 475 510 500M530 507 565 510M585 520 575 548M560 565 538 585M432 505 440 525M825 285 810 300 808 350M805 420 802 480M808 500 825 520M850 505 870 490M890 470 920 460M945 465 975 468M990 480 1015 505M1035 520 1065 525M1085 528 1115 520M1135 500 1150 485M1165 465 1190 445M1205 435 1240 425M1258 425 1275 450M1290 468 1312 452M1315 435 1290 405M1275 395 1250 380M1235 360 1210 340M1195 328 1165 327M1140 340 1130 350M1100 390 1115 375M1060 370 1040 345M1025 345 995 325M980 315 950 300M925 295 900 288M880 285 845 273M220 525 250 540M255 520 295 545M325 575 335 550 350 560M385 560 405 580M355 595 380 595M150 285H165"/>
<path d="M878 370 910 350 940 370 908 392Z" fill="none" stroke="#000" stroke-width="9"/>
<text class="cl" transform="translate(572,250) rotate(-60)">5</text><text class="cl" transform="translate(458,550) rotate(60)">10</text><text class="cl" transform="translate(815,392) rotate(-90)">10</text><text class="cl" x="1168" y="178">5</text><text class="cl" x="1365" y="230" style="font-size:50px">7.5</text>
<polyline class="x" points="30,190 187,188 345,188 495,185 655,180 808,176 965,170 1120,165 1277,158 1432,150"/>
<polyline class="x" transform="translate(0,9)" points="30,380 185,377 345,377 502,374 657,371 813,365 973,358 1128,352 1285,345 1440,335 30,572 190,569 350,569 505,567 662,563 822,557 980,551 1135,545 1295,536 1445,526 30,764 190,761 347,761 508,758 665,755 828,749 985,743 1145,737 1305,728 1450,718"/>
<text class="lab" x="30" y="380">3.88</text><text class="lab" x="185" y="377">3.50</text><text class="lab" x="345" y="377">3.86</text><text class="lab" x="502" y="374">7.13</text><text class="lab" x="657" y="371">7.26</text><text class="lab" x="813" y="365">10.1</text><text class="lab" x="973" y="358">11.7</text><text class="lab" x="1128" y="352">10.2</text><text class="lab" x="1285" y="345">9.23</text><text class="lab" x="1440" y="335">7.65</text>
<text class="lab" x="30" y="572">3.33</text><text class="lab" x="190" y="569">8.27</text><text class="lab" x="350" y="569">10.2</text><text class="lab" x="505" y="567">10.0</text><text class="lab" x="662" y="563">8.86</text><text class="lab" x="822" y="557">8.82</text><text class="lab" x="980" y="551">8.99</text><text class="lab" x="1135" y="545">9.68</text><text class="lab" x="1295" y="536">8.94</text><text class="lab" x="1445" y="526">6.94</text>
<text class="lab" x="30" y="764">6.53</text><text class="lab" x="190" y="761">7.47</text><text class="lab" x="347" y="761">6.39</text><text class="lab" x="508" y="758">6.61</text><text class="lab" x="665" y="755">5.31</text><text class="lab" x="828" y="749">6.58</text><text class="lab" x="985" y="743">5.90</text><text class="lab" x="1145" y="737">5.70</text><text class="lab" x="1305" y="728">6.20</text><text class="lab" x="1450" y="718">6.41</text>
</svg>
<!-- TILE 3 -->
<svg x="0" y="300" width="490" height="300" viewBox="0 0 1470 900" style="overflow:visible">
<path class="d" d="M180 80 198 62 220 60 236 80 218 100 200 96 180 80M1260 0 1258 35 1250 60M1265 85 1300 115 1325 100 1350 95 1400 95 1455 90"/>
<polyline class="x" transform="translate(0,9)" points="53,14 216,23 374,32 535,38 695,44 857,47 1016,50 1178,53 1340,53 41,205 203,215 365,221 528,231 690,234 851,238 1013,242 1175,245 1337,245 30,398 196,407 359,413 520,421 685,425 850,430 1012,434 1174,437 1336,437 15,589 185,600 351,605 516,611 678,617 843,623 1009,626 1173,629 1337,629 15,781 177,792 340,797 506,803 671,809 838,815 1003,818 1168,821 1334,821"/>
<text class="lab" x="53" y="14">3.80</text><text class="lab" x="216" y="23">4.77</text><text class="lab" x="374" y="32">2.66</text><text class="lab" x="535" y="38">0.499</text><text class="lab" x="695" y="44">1.26</text><text class="lab" x="857" y="47">1.79</text><text class="lab" x="1016" y="50">2.83</text><text class="lab" x="1178" y="53">4.46</text><text class="lab" x="1340" y="53">5.49</text>
<text class="lab" x="41" y="205">2.97</text><text class="lab" x="203" y="215">2.34</text><text class="lab" x="365" y="221">2.55</text><text class="lab" x="528" y="231">1.00</text><text class="lab" x="690" y="234">1.63</text><text class="lab" x="851" y="238">2.65</text><text class="lab" x="1013" y="242">2.80</text><text class="lab" x="1175" y="245">3.16</text><text class="lab" x="1337" y="245">3.38</text>
<text class="lab" x="30" y="398">1.61</text><text class="lab" x="196" y="407">0.602</text><text class="lab" x="359" y="413">0.597</text><text class="lab" x="520" y="421">0.704</text><text class="lab" x="685" y="425">0.889</text><text class="lab" x="850" y="430">1.67</text><text class="lab" x="1012" y="434">0.602</text><text class="lab" x="1174" y="437">0.625</text><text class="lab" x="1336" y="437">0.582</text>
<text class="lab" x="15" y="589">1.76</text><text class="lab" x="185" y="600">1.13</text><text class="lab" x="351" y="605">1.36</text><text class="lab" x="516" y="611">1.24</text><text class="lab" x="678" y="617">1.15</text><text class="lab" x="843" y="623">1.16</text><text class="lab" x="1009" y="626">0.385</text><text class="lab" x="1173" y="629">1.80</text><text class="lab" x="1337" y="629">1.45</text>
<text class="lab" x="15" y="781">3.22</text><text class="lab" x="177" y="792">3.14</text><text class="lab" x="340" y="797">2.45</text><text class="lab" x="506" y="803">3.30</text><text class="lab" x="671" y="809">1.42</text><text class="lab" x="838" y="815">0.379</text><text class="lab" x="1003" y="818">2.35</text><text class="lab" x="1168" y="821">2.82</text><text class="lab" x="1334" y="821">2.77</text>
</svg>
<!-- TILE 4 -->
<svg x="490" y="300" width="489" height="300" viewBox="0 0 1467 900" style="overflow:visible">
<path class="d" d="M10 90 35 97 62 97 88 90 108 75 130 60 155 45 175 40M275 50 270 70 298 62 290 85M375 70 398 75 420 85 445 65 453 43 462 18M490 10 525 18 480 55 525 48 505 75M1075 510 1100 535 1105 565 1120 585 1140 600 1160 620 1185 630 1210 628 1240 630 1260 643 1265 665 1260 695 1248 712 1220 718 1200 703 1175 695 1150 700 1125 708 1103 692 1085 672 1075 650 1065 620 1065 595 1072 570"/>
<text class="cl" transform="translate(1068,552) rotate(90)">5</text>
<polyline class="x" transform="translate(0,9)" points="30,55 192,53 350,53 510,47 675,44 833,41 995,35 1152,29 1315,20 30,245 192,245 353,245 515,241 678,236 840,233 1003,227 1163,218 1325,212 30,437 195,437 357,437 520,434 682,428 846,425 1010,419 1173,410 1333,404 30,629 196,629 358,629 523,626 688,620 853,617 1016,611 1178,602 1346,596 32,821 197,821 360,818 529,818 693,812 860,809 1025,803 1190,794 1355,785"/>
<text class="lab" x="30" y="55">5.59</text><text class="lab" x="192" y="53">3.78</text><text class="lab" x="350" y="53">4.99</text><text class="lab" x="510" y="47">5.91</text><text class="lab" x="675" y="44">3.56</text><text class="lab" x="833" y="41">2.69</text><text class="lab" x="995" y="35">1.66</text><text class="lab" x="1152" y="29">3.21</text><text class="lab" x="1315" y="20">1.26</text><text class="lab" x="1475" y="5">2.11</text>
<text class="lab" x="30" y="245">3.96</text><text class="lab" x="192" y="245">3.22</text><text class="lab" x="353" y="245">3.04</text><text class="lab" x="515" y="241">2.58</text><text class="lab" x="678" y="236">1.50</text><text class="lab" x="840" y="233">1.70</text><text class="lab" x="1003" y="227">1.77</text><text class="lab" x="1163" y="218">2.30</text><text class="lab" x="1325" y="212">1.14</text><text class="lab" x="1480" y="202">1.2</text>
<text class="lab" x="30" y="437">1.02</text><text class="lab" x="195" y="437">1.20</text><text class="lab" x="357" y="437">1.40</text><text class="lab" x="520" y="434">0.258</text><text class="lab" x="682" y="428">0.296</text><text class="lab" x="846" y="425">1.33</text><text class="lab" x="1010" y="419">2.35</text><text class="lab" x="1173" y="410">1.33</text><text class="lab" x="1333" y="404">2.96</text>
<text class="lab" x="30" y="629">1.14</text><text class="lab" x="196" y="629">1.77</text><text class="lab" x="358" y="629">2.40</text><text class="lab" x="523" y="626">2.18</text><text class="lab" x="688" y="620">0.522</text><text class="lab" x="853" y="617">0.539</text><text class="lab" x="1016" y="611">3.99</text><text class="lab" x="1178" y="602">4.31</text><text class="lab" x="1346" y="596">1.09</text>
<text class="lab" x="32" y="821">2.22</text><text class="lab" x="197" y="821">3.10</text><text class="lab" x="360" y="818">2.31</text><text class="lab" x="529" y="818">0.809</text><text class="lab" x="693" y="812">1.34</text><text class="lab" x="860" y="809">2.17</text><text class="lab" x="1025" y="803">2.64</text><text class="lab" x="1190" y="794">2.98</text><text class="lab" x="1355" y="785">1.66</text>
</svg>
<!-- TILE 5 -->
<svg x="0" y="600" width="490" height="300" viewBox="0 0 1470 900" style="overflow:visible">
<path class="d" d="M0 245 30 218 55 200 80 208 95 225 110 248 125 270 115 320 120 350 130 375 155 385 180 390 205 400 230 398 255 403 280 408 305 415 325 432M5 285 30 330 45 355 52 380M65 428 80 450 100 465"/>
<text class="cl" transform="translate(47,400) rotate(90)">5</text>
<polyline class="x" transform="translate(0,9)" points="165,83 332,89 499,95 666,101 832,106 1001,109 1168,112 1333,112 155,272 325,281 492,287 663,293 829,298 997,301 1165,304 1334,305"/>
<polyline class="v" transform="translate(0,9)" points="147,463 318,472 487,478 657,484 825,490 992,493 1163,496 1332,496"/>
<text class="lab" x="10" y="73">1.96</text><text class="lab" x="165" y="83">3.41</text><text class="lab" x="332" y="89">2.60</text><text class="lab" x="499" y="95">2.72</text><text class="lab" x="666" y="101">1.24</text><text class="lab" x="832" y="106">2.86</text><text class="lab" x="1001" y="109">3.33</text><text class="lab" x="1168" y="112">1.77</text><text class="lab" x="1333" y="112">2.79</text>
<text class="lab" x="2" y="264">4.24</text><text class="lab" x="155" y="272">4.41</text><text class="lab" x="325" y="281">2.12</text><text class="lab" x="492" y="287">2.11</text><text class="lab" x="663" y="293">1.48</text><text class="lab" x="829" y="298">0.333</text><text class="lab" x="997" y="301">4.25</text><text class="lab" x="1165" y="304">3.25</text><text class="lab" x="1334" y="305">1.20</text>
<text class="lab" x="-25" y="455">3.33</text><text class="lab" x="147" y="463">6.38</text><text class="lab" x="318" y="472">5.07</text><text class="lab" x="487" y="478">1.30</text><text class="lab" x="655" y="484">3.92</text><text class="lab" x="825" y="490">3.07</text><text class="lab" x="992" y="493">2.32</text><text class="lab" x="1163" y="496">2.47</text><text class="lab" x="1332" y="496">1.86</text>
</svg>
<!-- TILE 6 -->
<svg x="490" y="600" width="489" height="300" viewBox="0 0 1467 900" style="overflow:visible">
<path class="d" d="M280 100 295 125 320 140 335 165 340 190 345 220 350 245 360 270 370 300 380 345 395 370 415 390 435 407 465 430 495 455 520 470 540 485 590 490 635 492M280 75 295 55 315 40 350 15 370 12 385 35 420 75 440 95 460 145 490 185 510 205 550 235 600 260 640 290 650 320 660 345 668 370 690 415 710 435 735 440M430 250 425 300 435 330 440 355M465 385 505 405 525 420 550 435 575 438 615 405 615 380 610 350 600 325 580 300 545 300 535 275 515 260 490 240M805 355 790 380 785 430 790 455 810 470M825 345 855 345 880 355 890 380 880 405 890 430 875 435 835 440 820 410 835 370 860 370M920 295 935 270 950 245M1010 195 1035 185 1060 190 1075 210 1080 235 1065 265 1050 290 1030 325 1060 330 1045 355 1040 380 1015 380 1000 365 1020 345 965 320 940 310 920 295M1040 430 1050 430 1060 455 1030 455M1165 430 1195 415 1220 405 1245 398M1290 385 1315 370 1345 360 1385 400 1390 420 1365 435 1340 440 1290 450 1260 455 1210 455 1185 450M400 115 405 135 408 165 392 165"/>
<text class="cl" transform="translate(465,370) rotate(65)">7.5</text><text class="cl" x="595" y="490">5</text><text class="cl" transform="translate(988,215) rotate(-10)">5</text><text class="cl" transform="translate(1268,397) rotate(-10)">5</text>
<polyline class="x" transform="translate(0,9)" points="32,112 197,112 365,109 531,106 698,103 865,97 1030,91 1200,85 1367,76 32,305 200,305 367,302 536,299 702,295 871,290 1040,284 1208,277 1376,269"/>
<polyline class="v" transform="translate(0,9)" points="35,496 200,496 370,493 540,490 710,487 880,481 1046,475 1217,466 1385,460"/>
<text class="lab" x="32" y="112">2.12</text><text class="lab" x="197" y="112">3.43</text><text class="lab" x="365" y="109">6.89</text><text class="lab" x="531" y="106">1.63</text><text class="lab" x="698" y="103">0.441</text><text class="lab" x="865" y="97">2.45</text><text class="lab" x="1030" y="91">2.88</text><text class="lab" x="1200" y="85">1.60</text><text class="lab" x="1367" y="76">0.687</text>
<text class="lab" x="32" y="305">1.46</text><text class="lab" x="200" y="305">3.43</text><text class="lab" x="367" y="302">4.98</text><text class="lab" x="536" y="299">8.83</text><text class="lab" x="702" y="295">2.61</text><text class="lab" x="871" y="290">2.08</text><text class="lab" x="1040" y="284">5.33</text><text class="lab" x="1208" y="277">1.49</text><text class="lab" x="1376" y="269">2.34</text>
<text class="lab" x="35" y="496">0.381</text><text class="lab" x="200" y="496">1.61</text><text class="lab" x="370" y="493">2.44</text><text class="lab" x="540" y="490">4.19</text><text class="lab" x="710" y="487">4.20</text><text class="lab" x="880" y="481">6.08</text><text class="lab" x="1046" y="475">5.13</text><text class="lab" x="1217" y="466">3.08</text><text class="lab" x="1385" y="460">3.63</text>
</svg>

<!-- TITLE PANEL -->
<rect x="1" y="0" width="486" height="43" fill="#b4b4b4" stroke="#3c3c3c" stroke-width="1"/>
<path fill="none" stroke="#cfdde6" stroke-width="1" d="M28 0 40 13 67 17 100 30 130 43M133 27 150 27 163 38 168 43M268 0 268 43M380 0 367 17 353 30 343 43 330 42 317 33 307 30 297 43M423 0 430 43"/>
<path fill="none" stroke="#e6d9c6" stroke-width="1.5" d="M398 0 405 17 427 40"/>
<text x="4" y="17" font-size="14" fill="#111" textLength="410" lengthAdjust="spacing">ECMWF-INDEX-ANAL LCL-Height (m) Friday 17-10-2025 03:00</text>
<text x="4" y="37" font-size="14" fill="#3a3a3a" textLength="474" lengthAdjust="spacing">ECMWF-INDEX-ANAL WindShear_ (m/s) 0-1km Friday 17-10-2025 03:00</text>

<!-- LEGEND -->
<rect x="572" y="837" width="404" height="60" fill="#999"/>
<path fill="none" stroke="#b4cbe0" stroke-width="1" d="M680 837 690 867 687 887 690 897M952 837 953 847 970 857 976 867"/>
<path fill="none" stroke="#ffe3bc" stroke-width="1.5" d="M787 837 792 845M818 837 813 843M867 837 873 845M843 867 847 880 867 893 867 897"/>
<g stroke="#000" stroke-width="1">
<rect x="709.5" y="845" width="21" height="22" fill="#fff"/><rect x="730.5" y="845" width="21" height="22" fill="#a8a8ff"/><rect x="751.5" y="845" width="21" height="22" fill="#a857ff"/><rect x="772.5" y="845" width="21" height="22" fill="#aa00ff"/><rect x="793.5" y="845" width="21" height="22" fill="#d5007f"/><rect x="814.5" y="845" width="21" height="22" fill="#f00"/><rect x="835.5" y="845" width="21" height="22" fill="#fa0"/><rect x="856.5" y="845" width="21" height="22" fill="#ff0"/><rect x="877.5" y="845" width="21" height="22" fill="#af0"/><rect x="898.5" y="845" width="21" height="22" fill="#5a0"/><rect x="919.5" y="845" width="21" height="22" fill="#00aa7f"/><rect x="940.5" y="845" width="21" height="22" fill="#0af"/>
<path d="M730.5 867v4M772.5 867v4M814.5 867v4M856.5 867v4M898.5 867v4M940.5 867v4"/></g>
<g font-size="12.5" text-anchor="middle" fill="#111">
<text x="640" y="857" textLength="121">ECMWF-INDEX-ANAL</text><text x="640" y="873">LCL-Height</text><text x="640" y="889">m</text>
<text x="730" y="885">100</text><text x="772" y="885">400</text><text x="814" y="885">800</text><text x="856" y="885">1200</text><text x="898" y="885">1600</text><text x="940" y="885">2000</text></g>
</svg>
</body></html>
